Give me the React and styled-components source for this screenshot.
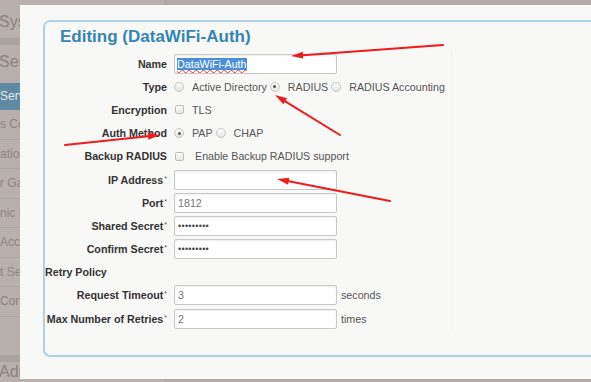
import styled, { createGlobalStyle, css } from 'styled-components';

const GlobalStyle = createGlobalStyle`
  html, body {
    margin: 0;
    padding: 0;
  }
  body {
    font-family: 'Liberation Sans', Arial, sans-serif;
    background: #b3aba7;
  }
`;

const Screen = styled.div`
  position: relative;
  width: 591px;
  height: 382px;
  overflow: hidden;
  display: flex;
  background: #b3aba7;
`;

/* dimmed page behind the dialog */
const Sidebar = styled.nav`
  width: 165px;
  flex: none;
  display: flex;
  flex-direction: column;
  padding-top: 5px;
  background: #b8b0ac;
  border-right: 1px solid #a59d99;
`;

const SideTitle = styled.div`
  height: ${p => p.$h}px;
  flex: none;
  display: flex;
  align-items: center;
  box-sizing: border-box;
  padding-bottom: ${p => p.$pb || 0}px;
  margin-left: -1px;
  font-size: 16px;
  color: #8b8380;
  white-space: nowrap;
`;

const SideBand = styled.div`
  height: 7px;
  flex: none;
  background: #aba39f;
`;

const SideItem = styled.div`
  height: ${p => p.$h || 29.5}px;
  flex: none;
  box-sizing: border-box;
  display: flex;
  align-items: center;
  font-size: 12px;
  white-space: nowrap;
  color: ${p => (p.$active ? '#e1e8ec' : '#8e8682')};
  background: ${p => (p.$active ? '#6089a3' : 'transparent')};
  border-bottom: 1px solid ${p => (p.$active ? '#6089a3' : '#aca5a1')};
`;

const SideSpacer = styled.div`
  flex: 1;
`;

/* dialog */
const Modal = styled.div`
  position: absolute;
  left: 20px;
  top: 5px;
  width: 620px;
  height: 374px;
  box-sizing: border-box;
  padding: 15px 0 0 23px;
  background: #f8f8f6;
`;

const Panel = styled.section`
  height: 337px;
  box-sizing: border-box;
  border: 2px solid #aed2e4;
  border-right: none;
  border-radius: 7px 0 0 7px;
  padding-top: 4px;
`;

const Title = styled.h2`
  margin: 0 0 4px 15px;
  font-size: 17px;
  line-height: 22px;
  font-weight: bold;
  color: #3585b3;
`;

const Form = styled.div`
  width: 406px;
  border-right: 1px solid #efefed;
`;

const Row = styled.div`
  display: grid;
  grid-template-columns: 129px 163px 1fr;
  align-items: center;
  height: 23.2px;
`;

const Label = styled.label`
  padding-right: 7px;
  text-align: right;
  font-size: 10.7px;
  font-weight: bold;
  color: #333;
  white-space: nowrap;

  ${p => p.$heading && css`
    grid-column: 1 / -1;
    text-align: left;
  `}
`;

const Req = styled.sup`
  margin-left: 1px;
  font-size: 7px;
  font-weight: normal;
  line-height: 0;
  vertical-align: 3px;
  color: #555;
`;

const Options = styled.div`
  grid-column: 2 / 4;
  display: flex;
  align-items: center;
`;

const Radio = styled.span`
  position: relative;
  width: 10px;
  height: 10px;
  flex: none;
  box-sizing: border-box;
  border: 1px solid #c6c6c6;
  border-radius: 50%;
  background: linear-gradient(#fdfdfd, #e4e4e4);

  ${p => p.$on && css`
    &::after {
      content: '';
      position: absolute;
      left: 2.5px;
      top: 2.5px;
      width: 3px;
      height: 3px;
      border-radius: 50%;
      background: #555;
    }
  `}
`;

const Check = styled.span`
  width: 9px;
  height: 9px;
  flex: none;
  margin-left: 1px;
  box-sizing: border-box;
  border: 1px solid #bdbdbd;
  border-radius: 2px;
  background: linear-gradient(#fbfbfb, #e6e6e6);
`;

const OptionText = styled.span`
  margin: 0 3px 0 ${p => p.$gap ?? 8}px;
  font-size: 10.7px;
  color: #555;
  white-space: nowrap;
`;

const TextBox = styled.div`
  height: 20px;
  box-sizing: border-box;
  display: flex;
  align-items: center;
  padding: 0 ${p => p.$pad ?? 3}px;
  border: 1px solid #c8c8c8;
  border-radius: 2px;
  background: #fff;
  box-shadow: inset 0 1px 2px rgba(0, 0, 0, 0.07);
  font-size: 10.7px;
  color: #777;
  white-space: nowrap;
  overflow: hidden;
`;

const Masked = styled.span`
  font-size: 9px;
  letter-spacing: 0.3px;
  color: #444;
`;

const Selected = styled.span`
  background: #4a8fdc;
  color: #fff;
  text-decoration: underline wavy #e53333;
  text-decoration-thickness: 1px;
  text-decoration-skip-ink: none;
  text-underline-offset: 1px;
`;

const Unit = styled.span`
  padding-left: 4px;
  font-size: 10.7px;
  color: #555;
`;

/* red annotation arrows drawn over the screenshot */
const Overlay = styled.svg`
  position: absolute;
  left: 0;
  top: 0;
  pointer-events: none;
`;

const Arrow = ({ from, to }) => {
  const dx = to[0] - from[0];
  const dy = to[1] - from[1];
  const len = Math.hypot(dx, dy);
  const ux = dx / len;
  const uy = dy / len;
  const bx = to[0] - ux * 12;
  const by = to[1] - uy * 12;
  const nx = -uy * 3.5;
  const ny = ux * 3.5;
  const head = `${to[0]},${to[1]} ${bx + nx},${by + ny} ${bx - nx},${by - ny}`;
  return (
    <g>
      <line x1={from[0]} y1={from[1]} x2={bx} y2={by} stroke="#ee1c1c" strokeWidth="2" strokeLinecap="round" />
      <polygon points={head} fill="#ee1c1c" />
    </g>
  );
};

const sideItems = ['s Con', 'ation', 'r Ga', 'nic P', 'Acce', 't Se', 'Cont'];

const App = () => {
  return (
    <>
      <GlobalStyle />
      <Screen>
        <Sidebar>
          <SideTitle $h={33}>Sys</SideTitle>
          <SideBand />
          <SideTitle $h={38} $pb={4}>Serv</SideTitle>
          <SideItem $h={27} $active>Serve</SideItem>
          {sideItems.map(t => (
            <SideItem key={t}>{t}</SideItem>
          ))}
          <SideSpacer />
          <SideBand />
          <SideTitle $h={20}>Adm</SideTitle>
        </Sidebar>

        <Modal>
          <Panel>
            <Title>Editing (DataWiFi-Auth)</Title>
            <Form>
              <Row>
                <Label>Name</Label>
                <TextBox $pad={2}>
                  <Selected>DataWiFi-Auth</Selected>
                </TextBox>
              </Row>
              <Row>
                <Label>Type</Label>
                <Options>
                  <Radio />
                  <OptionText>Active Directory</OptionText>
                  <Radio $on />
                  <OptionText>RADIUS</OptionText>
                  <Radio />
                  <OptionText>RADIUS Accounting</OptionText>
                </Options>
              </Row>
              <Row>
                <Label>Encryption</Label>
                <Options>
                  <Check />
                  <OptionText>TLS</OptionText>
                </Options>
              </Row>
              <Row>
                <Label>Auth Method</Label>
                <Options>
                  <Radio $on />
                  <OptionText>PAP</OptionText>
                  <Radio />
                  <OptionText>CHAP</OptionText>
                </Options>
              </Row>
              <Row>
                <Label>Backup RADIUS</Label>
                <Options>
                  <Check />
                  <OptionText $gap={11}>Enable Backup RADIUS support</OptionText>
                </Options>
              </Row>
              <Row>
                <Label>IP Address<Req>*</Req></Label>
                <TextBox />
              </Row>
              <Row>
                <Label>Port<Req>*</Req></Label>
                <TextBox>1812</TextBox>
              </Row>
              <Row>
                <Label>Shared Secret<Req>*</Req></Label>
                <TextBox><Masked>•••••••••</Masked></TextBox>
              </Row>
              <Row>
                <Label>Confirm Secret<Req>*</Req></Label>
                <TextBox><Masked>•••••••••</Masked></TextBox>
              </Row>
              <Row>
                <Label $heading>Retry Policy</Label>
              </Row>
              <Row>
                <Label>Request Timeout<Req>*</Req></Label>
                <TextBox>3</TextBox>
                <Unit>seconds</Unit>
              </Row>
              <Row>
                <Label>Max Number of Retries<Req>*</Req></Label>
                <TextBox>2</TextBox>
                <Unit>times</Unit>
              </Row>
            </Form>
          </Panel>
        </Modal>

        <Overlay width="591" height="382" viewBox="0 0 591 382">
          <Arrow from={[443, 45]} to={[291, 56]} />
          <Arrow from={[340, 135]} to={[275, 95]} />
          <Arrow from={[65, 145]} to={[160, 135]} />
          <Arrow from={[390, 201]} to={[277, 179]} />
        </Overlay>
      </Screen>
    </>
  );
};

export default App;
